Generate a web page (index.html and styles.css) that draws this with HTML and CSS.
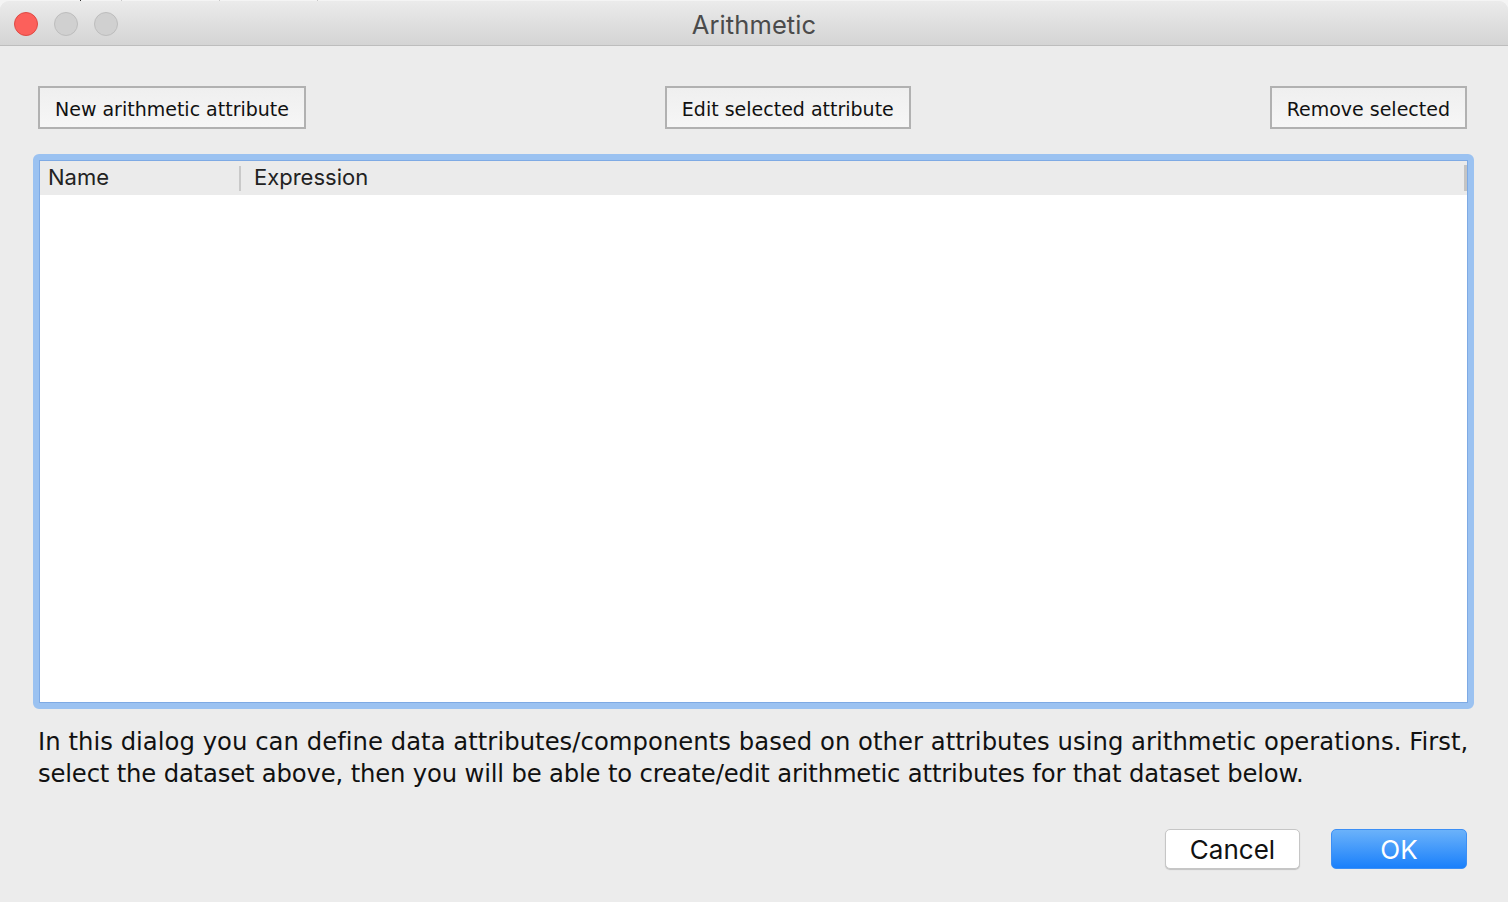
FILE: index.html
```html
<!DOCTYPE html>
<html lang="en">
<head>
<meta charset="utf-8">
<title>Arithmetic</title>
<link rel="stylesheet" href="styles.css">
</head>
<body>
<div class="backdrop">
  <span class="bd-line l1"></span><span class="bd-line l2"></span><span class="bd-line l3"></span><span class="bd-line l4"></span>
</div>
<div class="window">
  <div class="titlebar">
    <div class="lights">
      <span class="light red"></span>
      <span class="light grey"></span>
      <span class="light grey"></span>
    </div>
    <div class="title">Arithmetic</div>
    <div class="spacer"></div>
  </div>
  <div class="content">
    <div class="toolbar">
      <button class="sbtn">New arithmetic attribute</button>
      <button class="sbtn">Edit selected attribute</button>
      <button class="sbtn">Remove selected</button>
    </div>
    <div class="focus-ring">
      <div class="table">
        <div class="thead">
          <div class="th th-name">Name</div>
          <div class="th th-expr">Expression</div>
          <div class="th-end"></div>
        </div>
        <div class="tbody"></div>
      </div>
    </div>
    <p class="info"><span class="line1">In this dialog you can define data attributes/components based on other attributes using arithmetic operations. First,</span><br><span class="line2">select the dataset above, then you will be able to create/edit arithmetic attributes for that dataset below.</span></p>
    <div class="footer">
      <button class="mbtn cancel">Cancel</button>
      <button class="mbtn ok">OK</button>
    </div>
  </div>
</div>
</body>
</html>
```
FILE: styles.css
```css
* { box-sizing: border-box; }
html, body { margin: 0; padding: 0; }
body {
  width: 1508px;
  height: 902px;
  overflow: hidden;
  background: #f4f4f4;
  position: relative;
  font-family: "DejaVu Sans", "Liberation Sans", sans-serif;
  color: #141414;
}
.backdrop {
  position: absolute;
  left: 0; top: 0; width: 100%; height: 3px;
}
.bd-line { position: absolute; top: 0; width: 1px; height: 3px; background: #c9c9c9; }
.l1 { left: 80px; background: #333; }
.l2 { left: 121px; }
.l3 { left: 219px; }
.l4 { left: 317px; }
.window {
  position: relative;
  margin-top: 1px;
  height: 901px;
  background: #ececec;
  border-radius: 9px 9px 0 0;
  display: flex;
  flex-direction: column;
  overflow: hidden;
}
.titlebar {
  height: 45px;
  padding-top: 2px;
  flex: none;
  display: grid;
  grid-template-columns: 1fr auto 1fr;
  align-items: center;
  background: linear-gradient(#ebebeb, #d4d4d4);
  border-bottom: 1px solid #bdbdbd;
}
.lights {
  display: flex;
  gap: 16px;
  padding-left: 14px;
  align-items: center;
}
.light {
  width: 24px;
  height: 24px;
  border-radius: 50%;
  display: block;
}
.red { background: #fc605b; border: 1px solid #de4a44; }
.grey { background: #d0d0d0; border: 1px solid #bdbdbd; }
.title {
  font-family: "Inter", "Liberation Sans", sans-serif;
  font-size: 25.5px;
  padding-top: 0;
  color: #4b4b4b;
  letter-spacing: 0.1px;
}
.content {
  flex: 1;
  display: flex;
  flex-direction: column;
  padding: 40px 41px 0 38px;
}
.toolbar {
  display: flex;
  justify-content: space-between;
  align-items: center;
}
.sbtn {
  height: 43px;
  padding: 2px 15px 0;
  border: 2px solid #b1b1b1;
  background: linear-gradient(#efefef, #f6f6f6);
  font-family: "DejaVu Sans", sans-serif;
  font-size: 19px;
  color: #111;
  border-radius: 0;
}
.focus-ring {
  margin: 25px -7px 0 -5px;
  height: 555px;
  border: 6px solid #9bc2f1;
  border-radius: 6px;
}
.table {
  height: 100%;
  border: 1px solid #7eaae4;
  background: #fff;
  display: flex;
  flex-direction: column;
}
.thead {
  height: 34px;
  background: #ebebeb;
  display: flex;
  align-items: center;
  font-family: "Inter", "Liberation Sans", sans-serif;
  font-size: 22px;
  color: #222;
}
.th-name {
  width: 201px;
  padding-left: 8px;
  height: 25px;
  line-height: 23px;
  border-right: 2px solid #c9c9c9;
}
.th-expr {
  flex: 1;
  padding-left: 13px;
  height: 25px;
  line-height: 23px;
}
.th-end {
  width: 3px;
  height: 26px;
  background: #c4c4c4;
}
.tbody { flex: 1; }
.info {
  margin: 17px 0 0 0;
  font-size: 24.3px;
  line-height: 32px;
  white-space: nowrap;
  color: #111;
}
.line1 { letter-spacing: 0.035px; }
.line2 { letter-spacing: -0.17px; }
.footer {
  margin-top: 39px;
  display: flex;
  justify-content: flex-end;
  gap: 31px;
}
.mbtn {
  width: 136px;
  height: 40px;
  border-radius: 5px;
  font-family: "Inter", "Liberation Sans", sans-serif;
  font-size: 26px;
  padding: 0;
}
.cancel {
  background: #fff;
  border: 1px solid #c6c6c6;
  box-shadow: 0 1px 1px rgba(0,0,0,0.18);
  color: #111;
  width: 135px;
}
.ok {
  background: linear-gradient(#6bb2fa, #1a80fb);
  border: 1px solid #3c8ff5;
  color: #fff;
}
```
